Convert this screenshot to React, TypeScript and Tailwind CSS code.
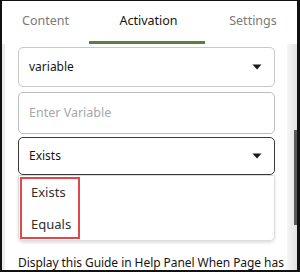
import React from "react";

const Caret = () => (
  <svg width="10" height="6" viewBox="0 0 10 6" className="shrink-0">
    <path d="M0.5 0.5 H9.5 L5 5.5 Z" fill="#1a1a1a" />
  </svg>
);

export default function App() {
  const font = { fontFamily: "'Noto Sans', 'Open Sans', sans-serif" } as React.CSSProperties;
  return (
    <div
      className="w-[300px] h-[272px] bg-white border-l-2 border-t border-r-[3px] border-b-2 border-[#111] overflow-hidden flex flex-col text-[#161513]"
      style={font}
    >
      {/* Tabs */}
      <div className="flex h-[43px] shrink-0 text-[12.5px]">
        <div className="w-[87px] flex items-center justify-center text-[#7a7a7a] pb-[2px]">Content</div>
        <div className="w-[116px] flex items-center justify-center border-b-[3px] border-[#5b7f3e] pt-[1px] pl-[3px] text-[#161513]">
          Activation
        </div>
        <div className="flex-1 flex items-center justify-center text-[#7a7a7a] pb-[2px] pl-[4px]">Settings</div>
      </div>

      <div className="flex flex-1 min-h-0">
        <div className="w-[3px] bg-[#ececec] shrink-0" />
        <div className="flex-1 min-w-0 flex flex-col pl-[13px] pr-[12px] pt-[3px]">
          {/* Select 1 */}
          <div className="h-[40px] shrink-0 border border-[#c8c8c8] rounded-[5px] flex items-center justify-between pl-[10px] pr-[12px] text-[12px]">
            <span>variable</span>
            <Caret />
          </div>
          {/* Input */}
          <div className="mt-[5px] h-[42px] shrink-0 border border-[#bdbdbd] rounded-[5px] flex items-center pl-[10px] text-[12.5px] text-[#a8a8a8]">
            Enter Variable
          </div>
          {/* Select 3 */}
          <div className="mt-[3px] h-[38px] shrink-0 border-[1.5px] border-[#3a3a3a] rounded-[5px] flex items-center justify-between pl-[10px] pr-[12px] text-[12px]">
            <span>Exists</span>
            <Caret />
          </div>
          {/* Listbox */}
          <div className="h-[66px] shrink-0 border border-[#dcdcdc] rounded-b-[5px] shadow-[0_2px_3px_rgba(0,0,0,0.12)] pl-[1px] pt-[1px]">
            <div className="w-[60px] h-[62px] border-2 border-[#e2484a] flex flex-col pl-[9px] pt-[3px] gap-[12px] text-[13px] text-[#303030]">
              <span className="leading-[20px]">Exists</span>
              <span className="leading-[20px]">Equals</span>
            </div>
          </div>
          <div className="mt-[13px] text-[12px] whitespace-nowrap tracking-[-0.06px]">Display this Guide in Help Panel When Page has</div>
        </div>
        {/* Scrollbar */}
        <div className="w-[10px] shrink-0 bg-gradient-to-r from-[#f6f6f6] to-[#e2e2e2] flex justify-end">
          <div className="w-[3px] bg-[#5a5a5a] mt-[86px] h-[95px]" />
        </div>
      </div>
    </div>
  );
}
